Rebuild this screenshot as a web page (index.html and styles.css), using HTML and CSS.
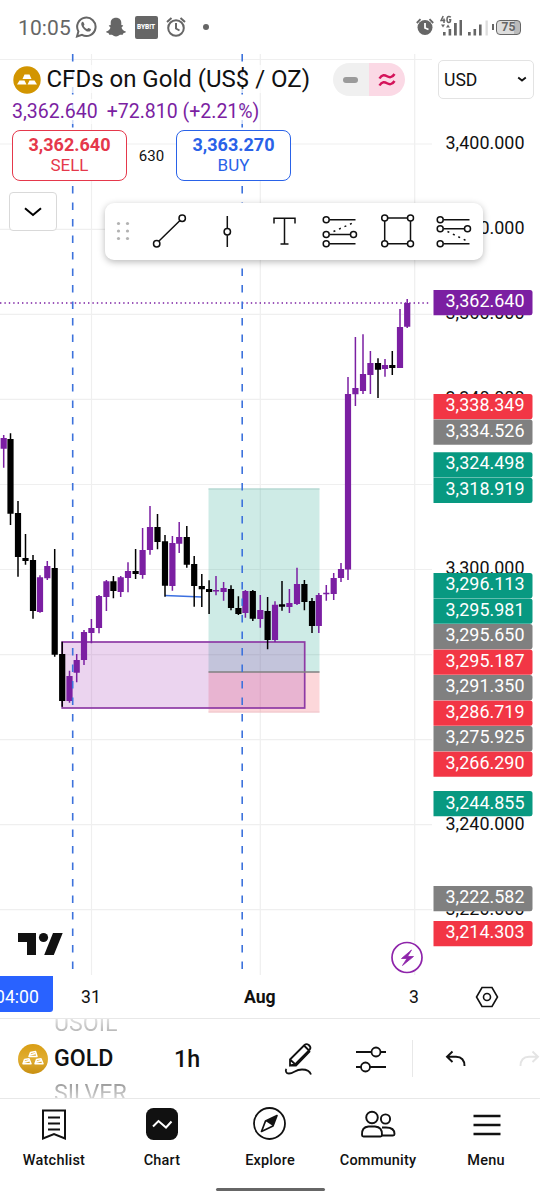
FILE: index.html
```html
<!DOCTYPE html>
<html lang="en">
<head>
<meta charset="utf-8">
<title>CFDs on Gold</title>
<link rel="stylesheet" href="styles.css">
</head>
<body>
<header class="status">
  <span class="clock">10:05</span>
  <svg class="whatsapp" width="22" height="22" viewBox="0 0 22 22"><path d="M2 20.500 3.400 15.400A9.200 9.200 0 1 1 7 18.900Z" fill="none" stroke="#666" stroke-width="2"/><path d="M7.500 5.800c-1.900 1-1.500 3.500.2 5.900 2.200 3.200 5.700 5 7.600 3.200.9-.9.8-1.700 0-2.100l-1.700-.8c-.6-.2-1 1-1.600.9-1.400-.5-2.600-1.700-3.200-2.900-.2-.6.9-1 .6-1.700l-.8-1.900c-.2-.5-.6-.8-1.100-.6Z" fill="#666"/></svg>
  <svg class="snap" width="20" height="20" viewBox="0 0 20 20"><path d="M10 .8c-3.400 0-5.300 2.200-5.300 5v2.300c-.6.300-1.500-.2-1.800.4-.3.800 1.300 1.100 1.500 1.900.1 1.500-2.200 3.700-4.200 4.200-.3 1.300 1.800 1.400 2.600 1.800.4.400.1 1.400.8 1.400.8 0 1.900-.4 2.900.2 1 .6 1.900 1.500 3.500 1.500s2.500-.9 3.500-1.500c1-.6 2.100-.2 2.900-.2.7 0 .4-1 .8-1.400.8-.4 2.900-.5 2.600-1.800-2-.5-4.300-2.700-4.200-4.200.2-.8 1.800-1.100 1.500-1.900-.3-.6-1.200-.1-1.800-.4V5.800c0-2.800-1.900-5-5.300-5Z" fill="#666"/></svg>
  <span class="bybit">BYB<i>!</i>T</span>
  <svg class="alarm" width="20" height="22" viewBox="0 0 20 22" fill="none" stroke="#666" stroke-width="2"><circle cx="10" cy="12" r="7.800"/><path d="M10 7v5.500l3.500 2M1 6l4.500-4M19 6l-4.500-4"/></svg>
  <span class="dot"></span>
  <svg class="alarm-on" width="18" height="18" viewBox="0 0 18 18"><circle cx="9" cy="9.500" r="7.500" fill="#666"/><path d="M.8 5 4.500 1.200M17.200 5l-3.700-3.800" stroke="#666" stroke-width="1.800"/><path d="M9 5v5l3.500 1.500" fill="none" stroke="#fff" stroke-width="1.800"/></svg>
  <svg class="signal" width="23" height="22" viewBox="0 0 23 22"><path d="M3.200 1 1 5.600h4.300M4 3.500V8M10.800 2.300Q10 1.500 8.800 1.500 7 1.500 7 4.500t1.800 3q1.800 0 1.800-2.800H9" fill="none" stroke="#666" stroke-width="1.500"/><path d="m1 9.500h4L3 12.500zM6 12.500h4L8 9.500zM3 17h2.600v3.500H3zM8.600 14h2.600v6.500H8.600zM14 8h2.800v12.500H14zM19.500 5h2.500v15.500h-2.500z" fill="#666"/></svg>
  <svg class="signal2" width="22" height="22" viewBox="0 0 22 22"><path d="M1 17h2.700v3.500H1zM6.500 14h2.600v6.500H6.500zM12 9.500h2.600v11H12z" fill="#666"/><path d="M18.500 5.500h2.300v15h-2.300z" fill="#ddd"/></svg>
  <span class="battery"><b>75</b></span>
</header>

<main class="chart">
  <svg class="plot" width="540" height="921" viewBox="0 54 540 921">
    <g stroke="#efefef" stroke-width="1.200" fill="none">
      <path d="M91.500 54V975M260.300 54V975M414.700 54V975"/>
      <path d="M0 59.500H432M0 144H432M0 229.300H432M0 314.300H432M0 399.300H432M0 484.500H432M0 569.500H432M0 654.600H432M0 739.600H432M0 824.700H432M0 909.700H432"/>
    </g>
    <rect x="208.500" y="488.500" width="111" height="183.500" fill="#089981" fill-opacity=".2"/>
    <rect x="208.500" y="672" width="111" height="40.500" fill="#f23645" fill-opacity=".2"/>
    <path d="M208.500 489H319.500" stroke="#a9cfc8" stroke-width="1"/>
    <path d="M208.500 712H319.500" stroke="#eec5cb" stroke-width="1"/>
    <rect x="62.200" y="642" width="242.500" height="66" fill="#9c27b0" fill-opacity=".2" stroke="#8e3aa5" stroke-width="1.700"/>
    <path d="M208.500 672H319.500" stroke="#808080" stroke-width="1.600"/>
    <path d="M165 595.500 202 597" stroke="#3b6fe0" stroke-width="1.500"/>
    <path d="M0 303H431" stroke="#7b1fa2" stroke-width="1.400" stroke-dasharray="1.400 3"/>
    <!-- falling candles: wicks, then bodies -->
    <path class="wick down" d="M10.500 433.300V525M18 501V576.700M25.500 534V564.700M33 555V618.700M54.700 549V656.700M62.200 641.700V706.700M113.400 576V598.300M135.600 549V579M157.500 514V549.300M165 535V596.700M186.800 526V567.700M194.200 556V606.700M201.800 574V607M209.100 580.300V614M231 585.300V610.300M238.400 596.300V615M252.800 590V621M267.600 597V649.300M282 581V610.700M304.400 580V610.300M312 598V633M378 358.300V398M392.300 351V375"/>
    <path class="body down" d="M10.500 439V513.700M18 513V557M25.500 558V561M33 560V611M54.700 568V654.700M62.200 654V701M113.400 581.300V591M135.600 571V574M157.500 527V542M165 541.300V585.700M186.800 537V564.700M194.200 564V586M201.800 586V589.300M209.100 589V592M231 589V608M238.400 608V614M252.800 591V618.700M267.600 611V640M282 604.300V606.700M304.400 584V602M312 601V626M378 363V369.700M392.300 365V368"/>
    <!-- rising candles: wicks, then bodies -->
    <path class="wick up" d="M3.700 435V467.700M40 575.300V612.700M47.300 561V580M69.500 670.700V702.700M76.700 654V682.300M84 630V665M91.400 619V643.300M99 595V633.300M106.400 580V611M120.700 576V597M128 562.300V592.300M142.600 528V578.700M150 506V554.700M172.400 536V590.700M179.200 522V553M216 576V595.300M223.600 582V600.700M245.400 590V617.700M260.300 595V627.700M275 601.300V642M289.400 589V613M297 567.700V605M318.800 593V633M326.300 585V600.700M333.700 573V600M341 563V582M348 377V580M355.400 337V406M363 334.300V394M370.400 351V394M385 359V376.700M400 309V368M407.200 299V328"/>
    <path class="body up" d="M3.700 438V448.700M40 577.300V612M47.300 566V578.300M69.500 676V701M76.700 660V672.700M84 632V660M91.400 628V633M99 596V628M106.400 581.300V597M120.700 577.300V592M128 571V578M142.600 550V575M150 527V550M172.400 543V586M179.200 537V543.700M216 590V591.500M223.600 588V592M245.400 591V613M260.300 610V619M275 604.700V640M289.400 603V607M297 584V604M318.800 595V626M326.300 592.700V594.300M333.700 578V594M341 569V578M348 394V569.500M355.400 388V394.300M363 374V391M370.400 363V375M385 365V369M400 327V368M407.200 303V326.700"/>
    <path d="M72.700 54V969M242.200 54V969" stroke="#3d72dc" stroke-width="1.600" stroke-dasharray="7.500 9"/>
    <g fill="#111"><path d="M18 933H36V955H27V942H18zM53 933H62.700L53.800 955H44.200z"/><circle cx="43.500" cy="937.500" r="4.600"/></g>
    <circle cx="407" cy="957.500" r="15" fill="#fff" stroke="#8e24aa" stroke-width="1.700"/>
    <path d="M411.500 950 401.500 958.500H407L402.500 965.500 413.500 956.500H407.500z" fill="#8e24aa" stroke="#8e24aa" stroke-width=".8"/>
    <!-- price scale -->
    <g class="ticks">
      <text x="445.500" y="148.800" textLength="79">3,400.000</text>
      <text x="445.500" y="234" textLength="79">3,380.000</text>
      <text x="445.500" y="319" textLength="79">3,360.000</text>
      <text x="445.500" y="404" textLength="79">3,340.000</text>
      <text x="445.500" y="574" textLength="79">3,300.000</text>
      <text x="445.500" y="829.700" textLength="79">3,240.000</text>
      <text x="445.500" y="914.700" textLength="79">3,220.000</text>
    </g>
    <defs><path id="tag" d="M0 0H96.500Q99 0 99 2.500V23Q99 25.300 96.500 25.300H0Z"/></defs>
    <g class="purple"><use href="#tag" x="433.500" y="290"/></g>
    <g class="red"><use href="#tag" x="433.500" y="394"/><use href="#tag" x="433.500" y="649.500"/><use href="#tag" x="433.500" y="700.500"/><use href="#tag" x="433.500" y="751.500"/><use href="#tag" x="433.500" y="921"/></g>
    <g class="gray"><use href="#tag" x="433.500" y="419.400"/><use href="#tag" x="433.500" y="624"/><use href="#tag" x="433.500" y="675"/><use href="#tag" x="433.500" y="726"/><use href="#tag" x="433.500" y="886"/></g>
    <g class="green"><use href="#tag" x="433.500" y="452.300"/><use href="#tag" x="433.500" y="477.700"/><use href="#tag" x="433.500" y="573"/><use href="#tag" x="433.500" y="598.500"/><use href="#tag" x="433.500" y="791"/></g>
    <g class="tags">
      <text x="445.500" y="307.300" textLength="79">3,362.640</text>
      <text x="445.500" y="411" textLength="79">3,338.349</text>
      <text x="445.500" y="436.500" textLength="79">3,334.526</text>
      <text x="445.500" y="469.400" textLength="79">3,324.498</text>
      <text x="445.500" y="495" textLength="79">3,318.919</text>
      <text x="445.500" y="590.300" textLength="79">3,296.113</text>
      <text x="445.500" y="615.800" textLength="79">3,295.981</text>
      <text x="445.500" y="641.300" textLength="79">3,295.650</text>
      <text x="445.500" y="666.800" textLength="79">3,295.187</text>
      <text x="445.500" y="692.300" textLength="79">3,291.350</text>
      <text x="445.500" y="717.800" textLength="79">3,286.719</text>
      <text x="445.500" y="743.300" textLength="79">3,275.925</text>
      <text x="445.500" y="768.800" textLength="79">3,266.290</text>
      <text x="445.500" y="808.500" textLength="79">3,244.855</text>
      <text x="445.500" y="903" textLength="79">3,222.582</text>
      <text x="445.500" y="938.300" textLength="79">3,214.303</text>
    </g>
  </svg>

  <div class="overlay">
    <div class="title-row">
      <svg class="coin" width="28" height="28" viewBox="0 0 28 28"><circle cx="14" cy="14" r="13.700" fill="#d29500"/><path d="M11.500 8.500h5l2 4.500h-9zM6.500 14.500h5l2 4h-9.500zM16.500 14.500h5l2.500 4h-9.500z" fill="#fff"/></svg>
      <h1><span>CFDs on Gold (US$ / OZ)</span></h1>
      <div class="toggle"><span class="flat"><i></i></span><span class="approx"><svg width="18" height="14" viewBox="0 0 18 14" fill="none" stroke="#d4145a" stroke-width="2.500"><path d="M1.500 5.500C4 1 7 2 9 3.200s5 2 7.500-2.200M1.500 12.500C4 8 7 9 9 10.200s5 2 7.500-2.200"/></svg></span></div>
      <div class="currency"><span>USD</span><svg width="10" height="7" viewBox="0 0 10 7" fill="none" stroke="#111" stroke-width="1.800"><path d="m1.200 1.500 3.800 3 3.800-3"/></svg></div>
    </div>
    <div class="quote"><span>3,362.640</span><span>+72.810 (+2.21%)</span></div>
    <div class="trade">
      <button class="sell"><b>3,362.640</b><span>SELL</span></button>
      <span class="spread">630</span>
      <button class="buy"><b>3,363.270</b><span>BUY</span></button>
    </div>
    <div class="tools-row">
      <button class="collapse"><svg width="20" height="12" viewBox="0 0 20 12" fill="none" stroke="#000" stroke-width="2"><path d="m2 2.200 8 6.800 8-6.800"/></svg></button>
      <div class="tools">
        <svg width="378" height="57" viewBox="105 203 378 57" fill="none" stroke="#111" stroke-width="1.500">
          <g fill="#b2b2b2" stroke="none"><circle cx="118.500" cy="223.500" r="1.600"/><circle cx="127.500" cy="223.500" r="1.600"/><circle cx="118.500" cy="231" r="1.600"/><circle cx="127.500" cy="231" r="1.600"/><circle cx="118.500" cy="238.500" r="1.600"/><circle cx="127.500" cy="238.500" r="1.600"/></g>
          <path d="M159 241 180 220.500M227.300 216V228.200M227.300 235.200V247"/>
          <path d="M274 223.500V218.300H295V223.500M284.500 218.300V244M280.500 244H288.500"/>
          <path d="M329.500 219.700H355.500M329.500 234.500H350M329.500 243.700H355.500M443.500 219.700H469.500M443.500 228.700H464M443.500 243.700H469.500"/>
          <path d="M333.500 231.500 355 222M447.500 231.500 468 241.500" stroke-dasharray="2 4"/>
          <path d="M384.700 218H410.500V243.700H384.700Z"/>
          <g fill="#fff"><circle cx="156.700" cy="243.700" r="3.200"/><circle cx="182.200" cy="218.200" r="3.200"/><circle cx="227.300" cy="231.700" r="3.200"/>
          <circle cx="326.200" cy="219.700" r="3"/><circle cx="326.200" cy="234.500" r="3"/><circle cx="353.500" cy="234.500" r="3"/><circle cx="326.200" cy="243.700" r="3"/>
          <circle cx="384.700" cy="218" r="3"/><circle cx="410.500" cy="218" r="3"/><circle cx="384.700" cy="243.700" r="3"/><circle cx="410.500" cy="243.700" r="3"/>
          <circle cx="440.200" cy="219.700" r="3"/><circle cx="440.200" cy="228.700" r="3"/><circle cx="467.500" cy="228.700" r="3"/><circle cx="440.200" cy="243.700" r="3"/></g>
        </svg>
      </div>
    </div>
  </div>
</main>

<div class="time-axis">
  <span class="cursor-time">04:00</span>
  <span class="t31">31</span>
  <b class="taug">Aug</b>
  <span class="t3">3</span>
  <svg width="24" height="22" viewBox="0 0 24 22" fill="none" stroke="#111" stroke-width="1.600"><path d="M7 1.500H17L22.500 11 17 20.500H7L1.500 11z"/><circle cx="12" cy="11" r="3.500"/></svg>
</div>

<section class="symbol-bar">
  <svg class="coin2" width="30" height="30" viewBox="0 0 30 30"><defs><linearGradient id="gold" x1="0" y1="0" x2="0" y2="1"><stop offset="0" stop-color="#d99e14"/><stop offset=".5" stop-color="#e0ad31"/><stop offset="1" stop-color="#c88f10"/></linearGradient></defs><circle cx="15" cy="15" r="15" fill="url(#gold)"/><g fill="#e0aa2c" stroke="#fff" stroke-width="1.500" stroke-linejoin="round"><path d="m12.500 8.500 5-1 1.500 5h-8zM6.500 15.500l4.500-.8L13 19.700H5zM18.500 15.500l4.500-.8 2 5h-8z"/></g><path d="M12 11l5.500-1.500M6 18.200l5.500-1.500M18 18.200l5.500-1.500" stroke="#fff" stroke-width="1.800"/></svg>
  <div class="wheel"><span class="prev">USOIL</span><b>GOLD</b><span class="next">SILVER</span></div>
  <b class="interval">1h</b>
  <svg class="pencil" width="30" height="34" viewBox="0 0 30 34" fill="none" stroke="#111" stroke-width="1.800"><path d="M6 17.500 20.500 3Q22.500 1.200 24.800 3 27.500 5.500 25.700 7.700L12 21.500 6 23.500zM6 17.500l6 5.500M20 3.500l5.500 5.500M6 23.500h6L26 9"/><path d="M2.500 27C1 28.500 2 31.500 5 31.500c5 0 6-4 13-4 5 0 8 2 9 5"/></svg>
  <svg class="sliders" width="32" height="28" viewBox="0 0 32 28" fill="none" stroke="#111" stroke-width="1.800"><path d="M1 7H16.500M25.500 7H31M1 22H6M15 22H31"/><circle cx="21" cy="7" r="4.500"/><circle cx="10.500" cy="22" r="4.500"/></svg>
  <span class="rule"></span>
  <svg class="undo" width="22" height="18" viewBox="0 0 22 18" fill="none" stroke="#111" stroke-width="1.900"><path d="M7.500 1.500 2 6.700 7.500 12M2 6.700H11Q19.500 7 19.500 16"/></svg>
  <svg class="redo" width="22" height="18" viewBox="0 0 22 18" fill="none" stroke="#e4e4e4" stroke-width="1.900"><path d="M14.500 1.500 20 6.700 14.500 12M20 6.700H11Q2.500 7 2.500 16"/></svg>
</section>

<nav class="nav">
  <a><svg width="34" height="34" viewBox="0 0 34 34" fill="none" stroke="#111" stroke-width="2"><path d="M6 3.500H28V31.500L17 27 6 31.500zM11 10.500H23M11 16.500H23M11 22.500H23"/></svg><span>Watchlist</span></a>
  <a><svg width="34" height="34" viewBox="0 0 34 34"><rect x="1" y="1" width="32" height="32" rx="7.500" fill="#111"/><path d="m8 19.500 5.500-5.500 7.500 6.500 5.500-6" fill="none" stroke="#fff" stroke-width="2"/></svg><span>Chart</span></a>
  <a><svg width="34" height="34" viewBox="0 0 34 34"><circle cx="16.500" cy="16.500" r="15.500" fill="none" stroke="#111" stroke-width="1.800"/><path d="M24 8.500 12.500 14 8.500 24.500 20 19z" fill="none" stroke="#111" stroke-width="1.700" stroke-linejoin="round"/><path d="M24 8.500 12.500 14 20 19z" fill="#111"/></svg><span>Explore</span></a>
  <a><svg width="36" height="34" viewBox="0 0 36 34" fill="none" stroke="#111" stroke-width="1.900"><circle cx="12" cy="10.500" r="5.800"/><circle cx="25.500" cy="12" r="4.600"/><path d="M2 28Q1.500 20 8.500 19.500H15Q22.500 20 22 28 22 29.500 20.500 29.500H3.500Q2 29.500 2 28zM22 20.500h4Q34.500 20.500 34.500 27q0 1.500-1.500 1.500H22.500"/></svg><span>Community</span></a>
  <a><svg width="34" height="34" viewBox="0 0 34 34" fill="none" stroke="#111" stroke-width="2.500"><path d="M4.500 9H31.500M4.500 18H31.500M4.500 27H31.500"/></svg><span>Menu</span></a>
</nav>
<div class="home"></div>
</body>
</html>
```
FILE: styles.css
```css
* { box-sizing: border-box; }
body {
  margin: 0;
  width: 540px;
  height: 1200px;
  overflow: hidden;
  display: flex;
  flex-direction: column;
  background: #fff;
  color: #111;
  font-family: Roboto, sans-serif;
}
svg { display: block; flex: none; }
button { padding: 0; background: #fff; font-family: inherit; }

.status { height: 54px; display: flex; align-items: center; padding-left: 18px; color: #666; flex: none; }
.clock { width: 56.500px; padding-top: 1px; font-size: 21px; letter-spacing: .1px; white-space: nowrap; }
.snap { margin-left: 9px; }
.bybit { margin-left: 9px; width: 23px; height: 23px; border-radius: 2px; background: #666; color: #fff; font-size: 6.500px; font-weight: 900; line-height: 22px; text-align: center; }
.bybit i { font-style: normal; }
.alarm { margin-left: 8.500px; }
.dot { margin-left: 17px; width: 6px; height: 6px; border-radius: 50%; background: #666; }
.alarm-on { margin-left: 207px; }
.signal { margin-left: 6px; margin-top: -2px; }
.signal2 { margin-left: 4px; margin-top: -2px; }
.battery { position: relative; margin-left: 7px; width: 25px; height: 15px; border: 1.500px solid #666; border-radius: 4px; background: linear-gradient(90deg, #ddd 75%, #bbb 75%); display: flex; align-items: center; justify-content: center; }
.battery::before { content: ""; position: absolute; left: -5px; top: 3px; width: 2px; height: 6px; background: #666; }
.battery b { font-size: 12px; line-height: 12px; }

.chart { display: grid; height: 921px; flex: none; }
.plot, .overlay { grid-area: 1 / 1; }
.wick, .body { fill: none; }
.wick { stroke-width: 1.500; }
.body { stroke-width: 6.200; }
.up { stroke: #7b1fa2; }
.down { stroke: #000; }
.ticks, .tags { font-size: 17.900px; }
.ticks { fill: #111; }
.tags { fill: #fff; }
.purple { fill: #7b1fa2; }
.red { fill: #f23645; }
.gray { fill: #808080; }
.green { fill: #089981; }

.overlay { z-index: 1; padding-left: 12px; padding-top: 6px; }
.title-row { display: flex; align-items: center; height: 39px; }
h1 { margin: 0 0 0 5.500px; width: 286px; font-size: 24px; font-weight: 400; line-height: 39px; white-space: nowrap; }
h1 span, .quote span { background: rgba(255, 255, 255, .75); }
.coin { margin-left: 1px; }
.toggle { display: flex; width: 72px; height: 33px; border-radius: 17px; overflow: hidden; flex: none; }
.toggle span { width: 36px; display: flex; align-items: center; justify-content: center; }
.flat { background: #f0f0f0; }
.flat i { width: 15px; height: 6px; border-radius: 3px; background: #9b9b9b; }
.approx { background: #fbd9e5; }
.currency { margin-left: 33.500px; width: 96px; height: 39px; border: 1.500px solid #e3e3e3; border-radius: 5px; background: #fff; display: flex; align-items: center; justify-content: space-between; padding: 0 6px 0 5px; font-size: 17.600px; }
.quote { display: flex; gap: 9px; height: 25px; line-height: 25px; font-size: 19.500px; color: #7b1fa2; white-space: nowrap; }
.trade { display: flex; align-items: center; margin-top: 6px; height: 51px; }
.trade button { width: 115px; height: 51px; border: 1.500px solid; border-radius: 8px; display: flex; flex-direction: column; align-items: center; justify-content: center; padding-bottom: 2px; font-size: 17px; line-height: 20px; }
.trade b { font-size: 18px; }
.sell { color: #e5384b; }
.buy { color: #2962e8; }
.spread { width: 49px; text-align: center; font-size: 15px; }
.tools-row { display: flex; align-items: flex-start; margin-top: 11px; }
.collapse { margin-left: -3px; width: 48px; height: 39px; border: 1.200px solid #d9d9d9; border-radius: 4px; display: flex; align-items: center; justify-content: center; }
.tools { margin: 11px 0 0 48px; width: 378px; height: 57px; border-radius: 9px; background: #fff; box-shadow: 0 2px 7px rgba(0, 0, 0, .28); }

.time-axis { display: flex; align-items: center; height: 44px; flex: none; border-bottom: 1px solid #e8e8e8; font-size: 17.600px; }
.time-axis > * { flex: none; }
.cursor-time { width: 53px; height: 36px; margin-bottom: 6px; background: #2962ff; color: #fff; border-radius: 0 0 3px 0; line-height: 42px; text-indent: -5px; }
.t31 { margin-left: 28px; width: 20px; text-align: center; }
.taug { margin-left: 143px; width: 34px; font-weight: 700; }
.t3 { margin-left: 131px; width: 12px; }
.time-axis svg { margin-left: 54px; }

.symbol-bar { display: flex; align-items: center; height: 80px; overflow: hidden; flex: none; border-bottom: 1px solid #e8e8e8; }
.symbol-bar > * { flex: none; }
.coin2 { margin-left: 18px; }
.wheel { margin-left: 6px; width: 120px; height: 105px; display: flex; flex-direction: column; justify-content: space-between; font-size: 23.200px; line-height: 35px; }
.wheel b, .interval { font-weight: 500; font-size: 23.200px; }
.prev, .next { color: transparent; -webkit-background-clip: text; background-clip: text; }
.prev { background-image: linear-gradient(#e8e8e8 30%, #999); }
.next { background-image: linear-gradient(#999 20%, #ddd 70%); }
.interval { width: 110px; }
.sliders { margin-left: 40.500px; }
.rule { margin-left: 25.500px; width: 1px; height: 37px; background: #e8e8e8; }
.undo { margin-left: 31.500px; }
.redo { margin-left: 51px; }

.nav { display: flex; height: 87px; padding-top: 8px; flex: none; }
.nav a { width: 108px; display: flex; flex-direction: column; align-items: center; gap: 10px; }
.nav span { font-size: 14.500px; font-weight: 500; line-height: 20px; letter-spacing: .2px; }
.home { align-self: center; width: 109px; height: 3px; border-radius: 2px; background: #666; margin-top: 2px; }
```
